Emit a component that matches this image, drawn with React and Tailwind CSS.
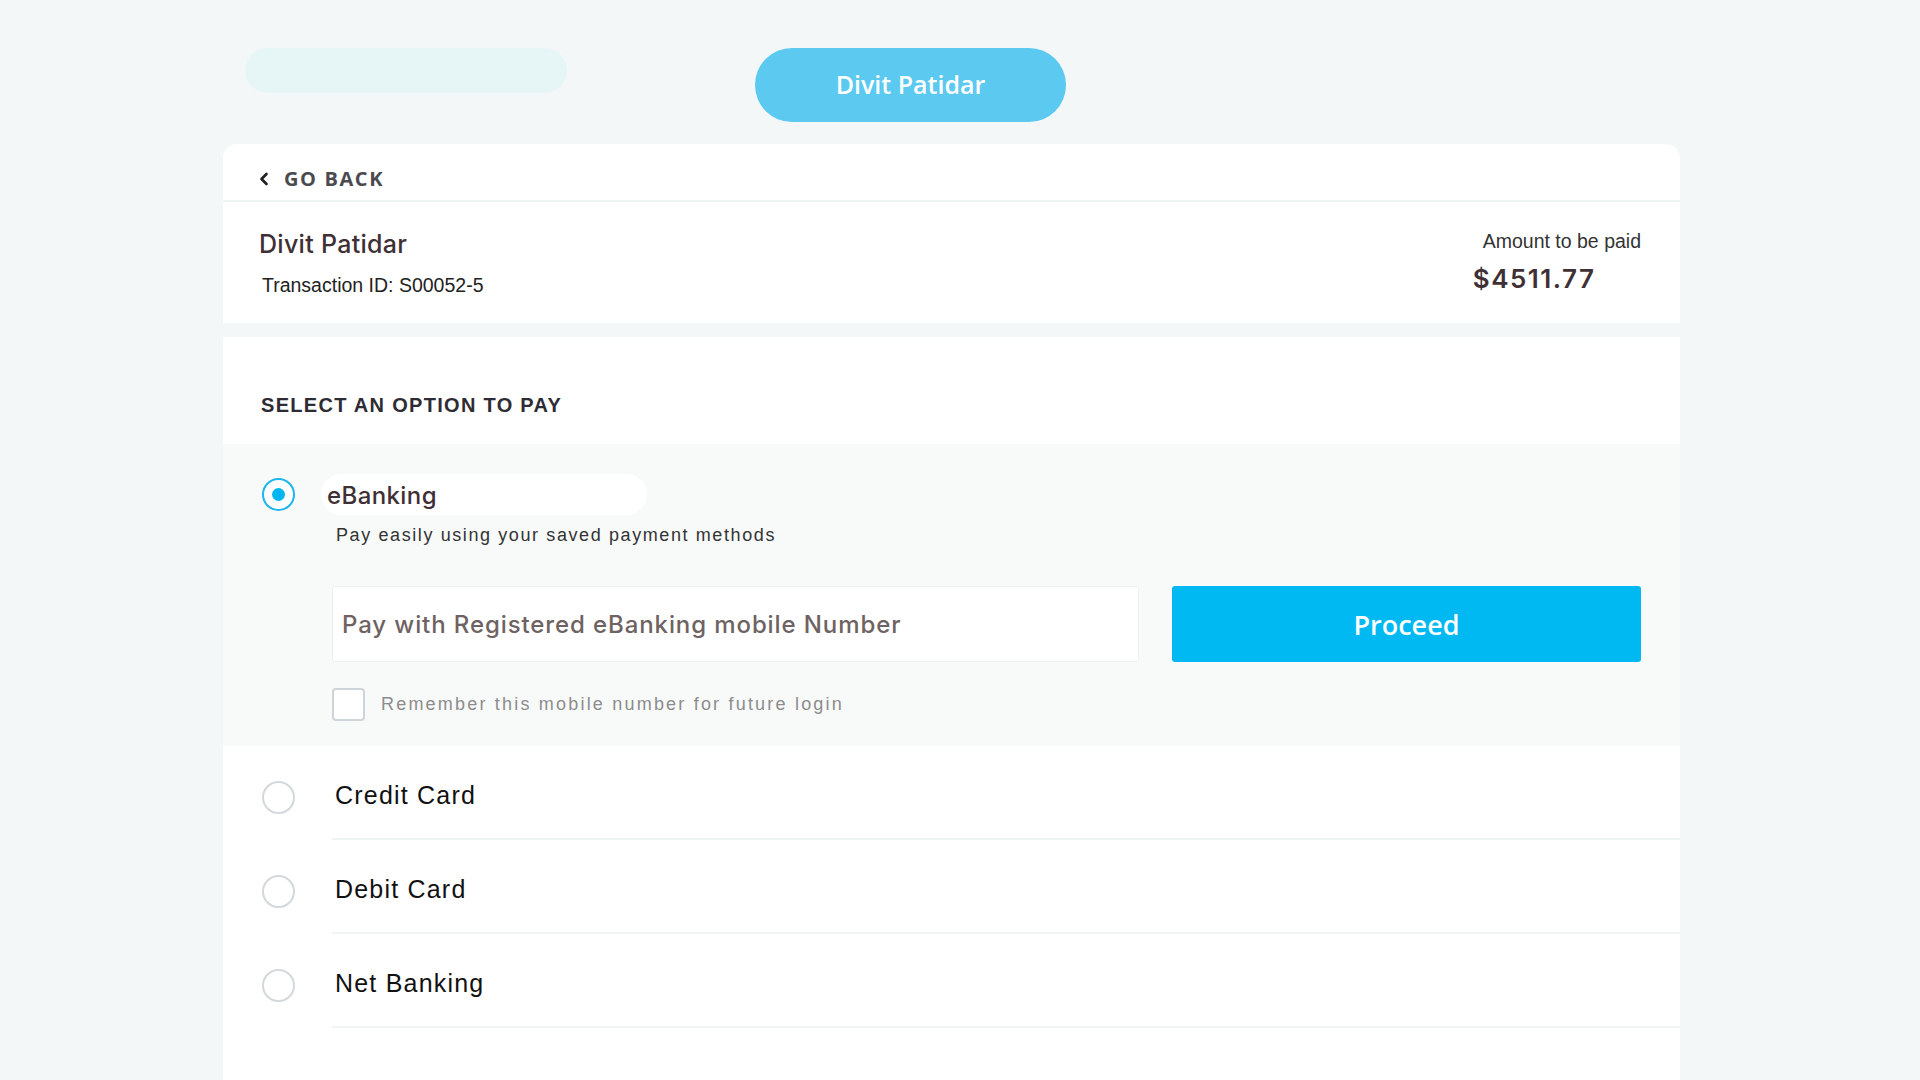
import { ChevronLeft } from 'lucide-react';

const sans = { fontFamily: '"Liberation Sans", Arial, sans-serif' };

function Radio({ checked }) {
  if (checked) {
    return (
      <span className="w-[33px] h-[33px] rounded-full border-[2px] border-[#1cb6ef] bg-white flex items-center justify-center flex-shrink-0">
        <span className="w-[13px] h-[13px] rounded-full bg-[#00b5f0]" />
      </span>
    );
  }
  return <span className="w-[33px] h-[33px] rounded-full border-[2px] border-[#d3d8dc] bg-white flex-shrink-0" />;
}

function OptionRow({ label }) {
  return (
    <div className="flex">
      <div className="w-[109px] pl-[39px] flex items-center pt-[8px]">
        <Radio />
      </div>
      <div className="flex-1 h-[94px] border-b-[2px] border-[#f1f4f5] flex items-center pt-[8px] pl-[3px]">
        <span className="font-['Liberation_Sans',Arial,sans-serif] text-[25px] tracking-[1.2px] text-[#111111]">{label}</span>
      </div>
    </div>
  );
}

export default function App() {
  return (
    <div className="min-h-screen bg-[#f3f7f8] pt-[48px] font-['Inter',sans-serif]">
      <div className="ml-[223px] w-[1457px]">
        {/* top bar */}
        <div className="flex items-start">
          <div className="ml-[22px] w-[322px] h-[45px] rounded-full bg-[#e6f6f7]" />
          <button className="ml-[188px] w-[311px] h-[74px] rounded-full bg-[#5bc9f0] text-white text-[25px] font-semibold font-['Open_Sans',sans-serif]">
            Divit Patidar
          </button>
        </div>

        {/* header card */}
        <div className="mt-[22px] bg-white rounded-t-[14px]">
          <div className="h-[58px] border-b-[2px] border-[#f0f4f4] flex items-center pl-[31px] pt-[14px]">
            <ChevronLeft className="w-[20px] h-[20px] text-[#222]" strokeWidth={3.2} />
            <span className="ml-[10px] text-[20px] font-bold tracking-[1.6px] text-[#4a4a4f] font-['Open_Sans',sans-serif]">GO BACK</span>
          </div>
          <div className="h-[121px] flex justify-between pl-[36px] pr-[39px]">
            <div className="pt-[27px]">
              <div className="text-[25px] font-medium tracking-[0.3px] text-[#3f3035] leading-[30px]">Divit Patidar</div>
              <div className="mt-[14px] ml-[3px] text-[19.5px] text-[#222] leading-[24px]" style={sans}>
                Transaction ID: S00052-5
              </div>
            </div>
            <div className="pt-[27px] flex flex-col items-start">
              <div className="pl-[7px] text-[19.5px] text-[#333] leading-[24px]" style={sans}>Amount to be paid</div>
              <div className="mt-[10px] -ml-[3px] text-[26px] font-semibold tracking-[1.5px] text-[#3f3035] leading-[32px]">$4511.77</div>
            </div>
          </div>
        </div>

        {/* payment options card */}
        <div className="mt-[14px] bg-white min-h-[744px]">
          <div className="h-[107px] pl-[38px] pt-[55px]">
            <div className="text-[20px] font-bold tracking-[1.3px] text-[#2d2b33] leading-[26px]" style={sans}>
              SELECT AN OPTION TO PAY
            </div>
          </div>

          <div className="bg-[#f8fafa] h-[302px] pt-[30px] pl-[39px] pr-[39px]">
            <div className="flex items-center">
              <Radio checked />
              <div className="ml-[26px] w-[326px] h-[41px] rounded-full bg-white flex items-center pl-[6px] pt-[3px]">
                <span className="text-[24px] font-medium tracking-[0.4px] text-[#3f3035]">eBanking</span>
              </div>
            </div>
            <div className="ml-[74px] mt-[9px] text-[18px] tracking-[1.6px] text-[#333] leading-[22px]" style={sans}>
              Pay easily using your saved payment methods
            </div>
            <div className="ml-[70px] mt-[40px] flex gap-[33px]">
              <input
                className="w-[807px] h-[76px] bg-white border border-[#eef1f2] rounded-[3px] px-[9px] text-[24px] font-medium tracking-[0.9px] placeholder:text-[#6e6262] outline-none"
                placeholder="Pay with Registered eBanking mobile Number"
              />
              <button className="flex-1 h-[76px] bg-[#00b9f2] rounded-[3px] text-white text-[27px] font-semibold font-['Open_Sans',sans-serif] pt-[3px]">
                Proceed
              </button>
            </div>
            <div className="ml-[70px] mt-[26px] flex items-center">
              <span className="w-[33px] h-[33px] rounded-[4px] border-[2px] border-[#cfd4d8] bg-white" />
              <span className="ml-[16px] text-[18px] tracking-[2.2px] text-[#8c8c8c]" style={sans}>
                Remember this mobile number for future login
              </span>
            </div>
          </div>

          <OptionRow label="Credit Card" />
          <OptionRow label="Debit Card" />
          <OptionRow label="Net Banking" />
        </div>
      </div>
    </div>
  );
}
